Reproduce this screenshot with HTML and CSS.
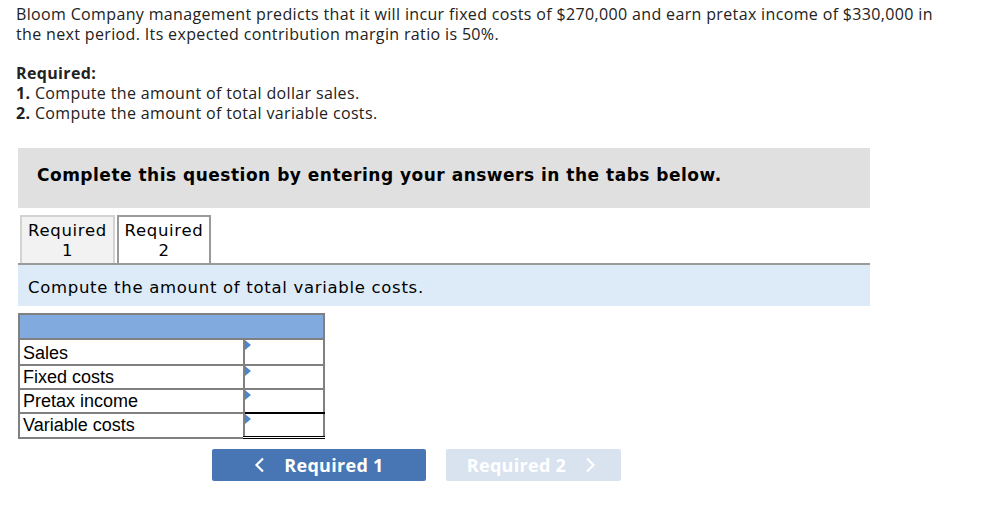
FILE: index.html
```html
<!DOCTYPE html>
<html>
<head>
<meta charset="utf-8">
<link rel="stylesheet" href="styles.css">
</head>
<body>
<div class="page">
  <div class="prompt">
    <p class="intro">Bloom Company management predicts that it will incur fixed costs of $270,000 and earn pretax income of $330,000 in the next period. Its expected contribution margin ratio is 50%.</p>
    <p class="req-title">Required:</p>
    <p class="req"><b>1.</b> Compute the amount of total dollar sales.</p>
    <p class="req"><b>2.</b> Compute the amount of total variable costs.</p>
  </div>
  <div class="banner">Complete this question by entering your answers in the tabs below.</div>
  <div class="tabs">
    <div class="tab inactive">Required<br>1</div>
    <div class="tab active">Required<br>2</div>
  </div>
  <div class="instruction">Compute the amount of total variable costs.</div>
  <table class="grid">
    <tr class="head"><td colspan="2"></td></tr>
    <tr><td class="label">Sales</td><td class="input"><span class="marker"></span></td></tr>
    <tr><td class="label">Fixed costs</td><td class="input"><span class="marker"></span></td></tr>
    <tr><td class="label">Pretax income</td><td class="input under"><span class="marker"></span></td></tr>
    <tr><td class="label">Variable costs</td><td class="input total"><span class="marker"></span></td></tr>
  </table>
  <div class="nav">
    <button class="btn prev"><svg width="11" height="16" viewBox="0 0 11 16"><path d="M9 1.5 L2.5 8 L9 14.5" fill="none" stroke="#fff" stroke-width="2.2"/></svg><span>Required 1</span></button>
    <button class="btn next"><span>Required 2</span><svg width="11" height="16" viewBox="0 0 11 16"><path d="M2 1.5 L8.5 8 L2 14.5" fill="none" stroke="#fff" stroke-width="2.2"/></svg></button>
  </div>
</div>
</body>
</html>
```
FILE: styles.css
```css
html, body { margin: 0; padding: 0; background: #fff; }
.page { padding: 4px 0 0 0; }
.prompt { padding: 0 16px; font-family: "Open Sans", "Lato", sans-serif; font-size: 16px; letter-spacing: 0.35px; color: #222; line-height: 20px; }
.prompt p { margin: 0; }
.intro { width: 932px; }
.req-title { margin-top: 19px !important; font-weight: bold; }
.req b { font-weight: bold; }
.banner { margin: 25px 0 0 18px; width: 852px; height: 60px; box-sizing: border-box; background: #e0e0e0; padding: 0 0 6px 19px; display: flex; align-items: center; font-family: "DejaVu Sans", Verdana, sans-serif; font-weight: bold; font-size: 17px; letter-spacing: 0.5px; color: #000; }
.tabs { display: flex; gap: 2px; margin: 7px 0 0 20px; }
.tab { width: 95px; height: 48px; box-sizing: border-box; font-family: "DejaVu Sans", Verdana, sans-serif; font-size: 16.5px; letter-spacing: 0.7px; line-height: 20px; color: #000; text-align: center; padding-top: 4px; }
.tab.inactive { background: #f2f2f2; border: 2px solid #d3d3d3; border-bottom: none; }
.tab.active { background: #fff; border: 2px solid #9a9a9a; border-bottom: none; width: 94px; }
.instruction { margin-left: 18px; width: 852px; height: 43px; box-sizing: border-box; border-top: 2px solid #9a9a9a; background: #ddebf8; font-family: "DejaVu Sans", Verdana, sans-serif; font-size: 16.5px; letter-spacing: 0.7px; color: #000; padding: 13px 0 0 10px; }
.grid { margin: 7px 0 0 18px; border-collapse: collapse; border: 2px solid #808080; font-family: "Liberation Sans", Arial, sans-serif; font-size: 18px; color: #000; }
.grid td { padding: 0; }
.grid .head td { background: #81abdf; height: 23px; border-bottom: 2px solid #808080; }
.grid .label { width: 220px; height: 22px; padding-left: 3px; border: 2px solid #808080; border-left: none; line-height: 20px; }
.grid .input { width: 78px; height: 22px; border: 2px solid #808080; border-right: none; position: relative; vertical-align: top; }
.grid tr:nth-child(2) td { height: 23px; padding-top: 1px; }
.grid .input.under { border-bottom: 2px solid #000; }
.grid .input.total { border-bottom: 3px double #000; }
.marker { position: absolute; left: 0; top: 0; width: 0; height: 0; border-top: 5px solid transparent; border-bottom: 5px solid transparent; border-left: 6px solid #4a86d0; }
.nav { display: flex; gap: 20px; margin: 10px 0 0 212px; }
.btn { height: 32px; border: none; border-radius: 2px; color: #fff; font-family: "Open Sans", "Inter", sans-serif; font-weight: bold; font-size: 18px; letter-spacing: 0.3px; display: flex; align-items: center; justify-content: center; gap: 19px; padding: 0; }
.btn.prev { width: 214px; background: #4876b4; }
.btn.next { width: 175px; background: #d9e3ef; }
.btn.next span { margin-left: -4px; }
```
